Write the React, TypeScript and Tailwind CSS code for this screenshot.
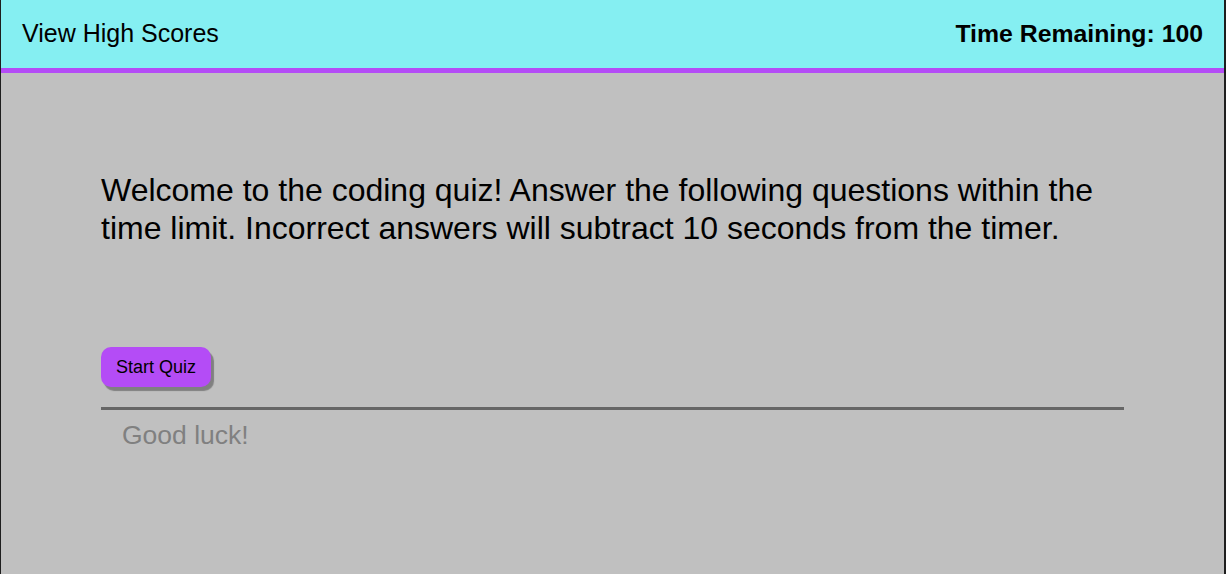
import React from 'react';

const App: React.FC = () => {
  return (
    <div className="min-h-[574px] flex flex-col bg-[#c0c0c0] border-l border-r-2 border-[#1e1e1e] font-['Liberation_Sans',Arial,sans-serif] text-black">
      {/* barra superior */}
      <header className="h-[73px] flex items-center justify-between px-[21px] bg-[#85eff2] border-b-[5px] border-[#b44cf6] box-border">
        <a className="text-[25px] cursor-pointer">View High Scores</a>
        <span className="text-[24.8px] font-bold">Time Remaining: 100</span>
      </header>

      <main className="px-[100px] pt-[98px]">
        <p className="text-[32px] leading-[38px]">
          Welcome to the coding quiz! Answer the following questions within the time limit. Incorrect answers will
          subtract 10 seconds from the timer.
        </p>

        <button className="mt-[100px] h-[40px] px-[15px] rounded-[10px] bg-[#b44cf6] text-[18px] shadow-[3px_4px_1px_#808080]">
          Start Quiz
        </button>

        <hr className="mt-[20px] border-0 h-[3px] bg-[#666666]" />
        <p className="pl-[21px] pt-[6px] text-[26.5px] text-[#808080]">Good luck!</p>
      </main>
    </div>
  );
};

export default App;
